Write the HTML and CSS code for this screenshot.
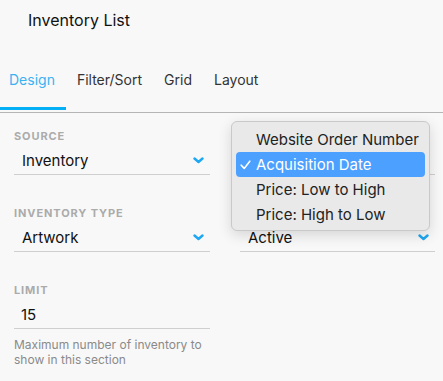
FILE: index.html
```html
<!DOCTYPE html>
<html>
<head>
<meta charset="utf-8">
<link rel="stylesheet" href="styles.css">
</head>
<body>
<div class="page">
  <div class="title">Inventory List</div>
  <div class="tabs">
    <div class="tab active">Design</div>
    <div class="tab">Filter/Sort</div>
    <div class="tab">Grid</div>
    <div class="tab">Layout</div>
  </div>
  <div class="form">
    <div class="col">
      <div class="field">
        <div class="label">SOURCE</div>
        <div class="select"><span>Inventory</span><svg class="chev" width="11" height="7" viewBox="0 0 11 7"><path d="M1.5 1.5 L5.5 5 L9.5 1.5" fill="none" stroke="#1ea7f2" stroke-width="2.4" stroke-linecap="round" stroke-linejoin="round"/></svg></div>
      </div>
      <div class="field">
        <div class="label">INVENTORY TYPE</div>
        <div class="select"><span>Artwork</span><svg class="chev" width="11" height="7" viewBox="0 0 11 7"><path d="M1.5 1.5 L5.5 5 L9.5 1.5" fill="none" stroke="#1ea7f2" stroke-width="2.4" stroke-linecap="round" stroke-linejoin="round"/></svg></div>
      </div>
      <div class="field">
        <div class="label">LIMIT</div>
        <div class="select input"><span>15</span></div>
        <div class="help">Maximum number of inventory to show in this section</div>
      </div>
    </div>
    <div class="col">
      <div class="field">
        <div class="label"></div>
        <div class="select"><span></span><svg class="chev" width="11" height="7" viewBox="0 0 11 7"><path d="M1.5 1.5 L5.5 5 L9.5 1.5" fill="none" stroke="#1ea7f2" stroke-width="2.4" stroke-linecap="round" stroke-linejoin="round"/></svg></div>
      </div>
      <div class="field">
        <div class="label"></div>
        <div class="select"><span>Active</span><svg class="chev" width="11" height="7" viewBox="0 0 11 7"><path d="M1.5 1.5 L5.5 5 L9.5 1.5" fill="none" stroke="#1ea7f2" stroke-width="2.4" stroke-linecap="round" stroke-linejoin="round"/></svg></div>
      </div>
    </div>
  </div>
  <div class="menu">
    <div class="item">Website Order Number</div>
    <div class="item selected"><svg class="check" width="11" height="10" viewBox="0 0 11 10"><path d="M1.2 5.2 L4.2 8.4 L9.8 1.2" fill="none" stroke="#fff" stroke-width="1.6" stroke-linecap="round" stroke-linejoin="round"/></svg>Acquisition Date</div>
    <div class="item">Price: Low to High</div>
    <div class="item">Price: High to Low</div>
  </div>
</div>
</body>
</html>
```

FILE: styles.css
```css
html, body {
  margin: 0;
  padding: 0;
  background: #f8f8f8;
}
body {
  font-family: Inter, "Liberation Sans", sans-serif;
  color: #1a1a1a;
}
.page {
  position: relative;
  width: 443px;
  height: 381px;
  overflow: hidden;
}
.title {
  padding: 10px 0 0 28px;
  height: 30px;
  font-size: 16px;
  line-height: 20px;
  color: #111;
}
.tabs {
  display: flex;
  border-bottom: 1px solid #b5b5b5;
  box-sizing: border-box;
  height: 73px;
  padding-top: 10px;
}
.tab {
  padding: 0 11px;
  font-size: 14px;
  line-height: 20px;
  height: 60px;
  box-sizing: border-box;
  padding-top: 20px;
  color: #333;
}
.tab:first-child {
  padding-left: 9px;
}
.tab.active {
  color: #3ab3f3;
  border-bottom: 3px solid #05aff5;
}
.form {
  display: flex;
  gap: 30px;
  padding: 16px 0 0 14px;
}
.col {
  width: 196px;
  display: flex;
  flex-direction: column;
  gap: 31px;
}
.col + .col {
  width: 195px;
}
.label {
  font-size: 11px;
  line-height: 14px;
  height: 14px;
  font-weight: 700;
  letter-spacing: 0.9px;
  color: #ababab;
  margin-bottom: 4px;
}
.select {
  display: flex;
  align-items: center;
  justify-content: space-between;
  height: 28px;
  box-sizing: border-box;
  border-bottom: 1px solid #cfcfcf;
  padding: 0 6px 0 8px;
  font-size: 15px;
  color: #111;
}
.chev {
  display: block;
}
.input {
  padding-left: 7px;
}
.help {
  margin-top: 8px;
  font-size: 12px;
  line-height: 15px;
  color: #8a8a8a;
}
.menu {
  position: absolute;
  left: 231px;
  top: 121px;
  width: 199px;
  height: 110px;
  box-sizing: border-box;
  padding: 5px 4px;
  background: #e9e9e9;
  border: 1px solid #c9c9c9;
  border-radius: 6px;
  box-shadow: 0 4px 14px rgba(0, 0, 0, 0.14);
}
.item {
  position: relative;
  height: 25px;
  line-height: 25px;
  padding-left: 20px;
  font-size: 15px;
  color: #222;
  border-radius: 4px;
}
.item.selected {
  background: #4ca0ff;
  color: #fff;
}
.check {
  position: absolute;
  left: 4px;
  top: 8px;
}
```
